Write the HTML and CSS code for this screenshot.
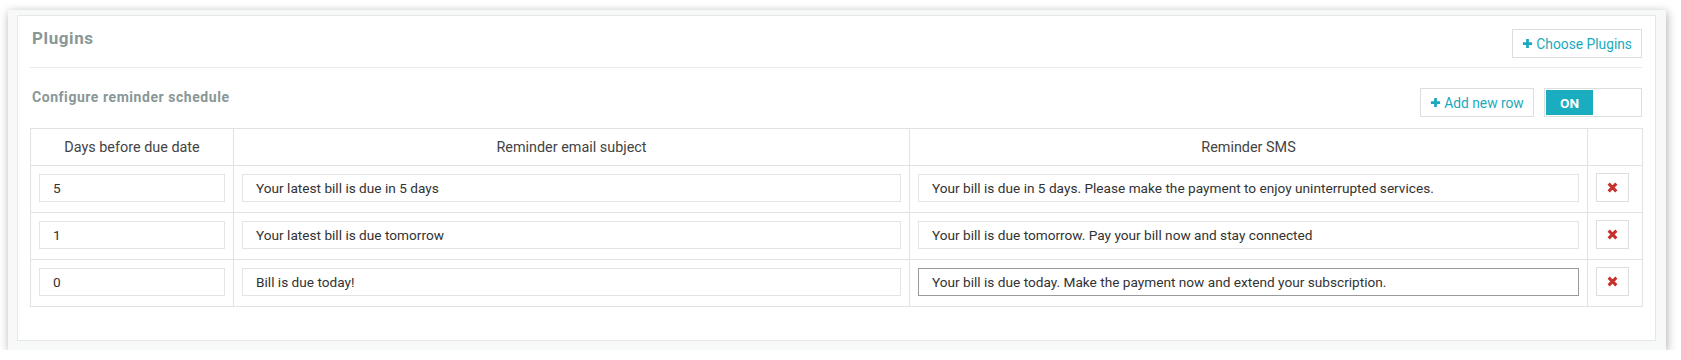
FILE: index.html
```html
<!DOCTYPE html>
<html lang="en">

<head>
    <meta charset="UTF-8">
    <title>Plugins</title>
    <link rel="stylesheet" href="styles.css">
</head>

<body>
    <div class="frame">
        <div class="panel">
            <div class="panel-head">
                <h2 class="panel-title">Plugins</h2>
                <button class="btn">
                    <svg class="plus" viewBox="0 0 12 12"><path d="M6 1v10M1 6h10" /></svg>
                    Choose Plugins
                </button>
            </div>
            <div class="sub-head">
                <h3 class="sub-title">Configure reminder schedule</h3>
                <div class="sub-actions">
                    <button class="btn btn-add">
                        <svg class="plus" viewBox="0 0 12 12"><path d="M6 1v10M1 6h10" /></svg>
                        Add new row
                    </button>
                    <div class="toggle">
                        <span class="toggle-on">ON</span>
                    </div>
                </div>
            </div>
            <table class="schedule">
                <colgroup>
                    <col class="c-days">
                    <col class="c-subject">
                    <col class="c-sms">
                    <col class="c-del">
                </colgroup>
                <thead>
                    <tr>
                        <th>Days before due date</th>
                        <th>Reminder email subject</th>
                        <th>Reminder SMS</th>
                        <th></th>
                    </tr>
                </thead>
                <tbody>
                    <tr>
                        <td><input class="field" type="text" value="5"></td>
                        <td><input class="field" type="text" value="Your latest bill is due in 5 days"></td>
                        <td><input class="field" type="text" value="Your bill is due in 5 days. Please make the payment to enjoy uninterrupted services."></td>
                        <td><button class="del"><svg viewBox="0 0 10 10"><path d="M1.5 1.5l7 7M8.5 1.5l-7 7" /></svg></button></td>
                    </tr>
                    <tr>
                        <td><input class="field" type="text" value="1"></td>
                        <td><input class="field" type="text" value="Your latest bill is due tomorrow"></td>
                        <td><input class="field" type="text" value="Your bill is due tomorrow. Pay your bill now and stay connected"></td>
                        <td><button class="del"><svg viewBox="0 0 10 10"><path d="M1.5 1.5l7 7M8.5 1.5l-7 7" /></svg></button></td>
                    </tr>
                    <tr>
                        <td><input class="field" type="text" value="0"></td>
                        <td><input class="field" type="text" value="Bill is due today!"></td>
                        <td><input class="field active" type="text" value="Your bill is due today. Make the payment now and extend your subscription."></td>
                        <td><button class="del"><svg viewBox="0 0 10 10"><path d="M1.5 1.5l7 7M8.5 1.5l-7 7" /></svg></button></td>
                    </tr>
                </tbody>
            </table>
        </div>
    </div>
</body>

</html>
```

FILE: styles.css
```css
* {
    box-sizing: border-box;
}

body {
    margin: 0;
    background: #fff;
    font-family: Roboto, "Liberation Sans", sans-serif;
    font-size: 13.6px;
    color: #333;
}

.frame {
    margin: 10px 0 0 8px;
    width: 1658px;
    height: 340px;
    padding: 5px 10px 9px 9px;
    background: #f7f8f8;
    box-shadow: 1px 2px 9px rgba(0, 0, 0, 0.32);
}

.panel {
    height: 100%;
    background: #fff;
    border: 1px solid #e6e8e8;
    padding: 13px 13px 0 12px;
}

.panel-head {
    display: flex;
    justify-content: space-between;
    align-items: flex-start;
    height: 29px;
}

.panel-title {
    margin: -1px 0 0;
    padding: 0 0 0 2px;
    font-size: 17px;
    line-height: 20px;
    letter-spacing: 0.6px;
    font-weight: bold;
    color: #8a9797;
}

.sub-head {
    border-top: 1px solid #e8eaea;
    margin-top: 9px;
    padding-top: 20px;
    display: flex;
    justify-content: space-between;
    align-items: flex-start;
}

.sub-title {
    margin: 0;
    padding: 1px 0 0 2px;
    font-size: 14px;
    line-height: 16px;
    letter-spacing: 0.55px;
    font-weight: bold;
    color: #8a9797;
}

.sub-actions {
    display: flex;
    gap: 10px;
}

button:focus {
    outline: none;
}

.btn {
    display: flex;
    align-items: center;
    justify-content: center;
    height: 29px;
    padding: 0 9px;
    background: #fff;
    border: 1px solid #dcdfdf;
    border-radius: 0;
    color: #1aa9bd;
    font-family: inherit;
    font-size: 13.8px;
    white-space: nowrap;
    cursor: pointer;
}

.btn .plus {
    width: 11px;
    height: 11px;
    margin-right: 3px;
}

.plus path {
    stroke: #1aa9bd;
    stroke-width: 3;
    fill: none;
}

.btn-add {
    width: 114px;
    padding: 0;
}

.toggle {
    width: 98px;
    height: 29px;
    border: 1px solid #dcdfdf;
    padding: 1px;
}

.toggle-on {
    display: flex;
    align-items: center;
    justify-content: center;
    width: 47px;
    height: 100%;
    background: #1aadbf;
    color: #fff;
    font-weight: bold;
    font-size: 13.6px;
}

.schedule {
    margin-top: 11px;
    width: 1612px;
    border-collapse: collapse;
    table-layout: fixed;
}

.c-days {
    width: 203px;
}

.c-subject {
    width: 676px;
}

.c-sms {
    width: 678px;
}

.c-del {
    width: 55px;
}

.schedule th,
.schedule td {
    border: 1px solid #e1e3e3;
}

.schedule th {
    height: 37px;
    font-weight: normal;
    font-size: 14.4px;
    color: #444;
    text-align: center;
}

.schedule td {
    padding: 8px 8px 10px;
}

.field {
    display: block;
    width: 100%;
    height: 28px;
    border: 1px solid #e3e5e5;
    padding: 0 13px;
    font-family: inherit;
    font-size: 13.65px;
    color: #333;
    background: #fff;
    outline: none;
}

.field.active {
    border-color: #9a9a9a;
}

.del {
    display: flex;
    align-items: center;
    justify-content: center;
    width: 33px;
    height: 29px;
    margin-top: -1px;
    padding: 0;
    background: #fff;
    border: 1px solid #dcdfdf;
    cursor: pointer;
}

.del svg {
    width: 11px;
    height: 11px;
}

.del path {
    stroke: #c9302c;
    stroke-width: 2.8;
    fill: none;
}
```
